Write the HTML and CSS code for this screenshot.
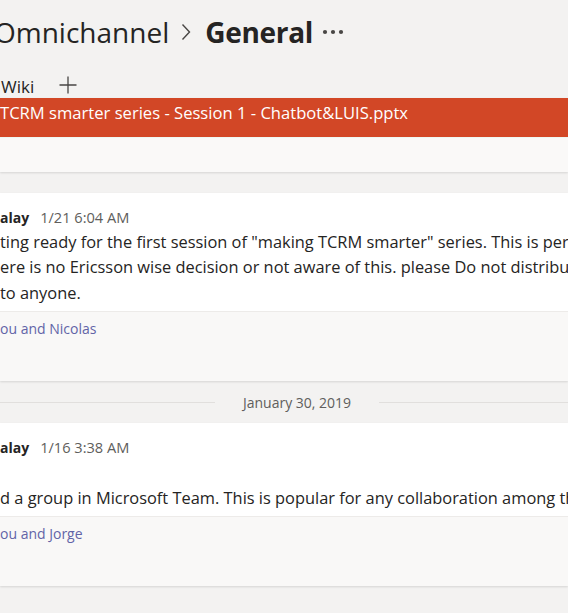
FILE: index.html
```html
<!DOCTYPE html>
<html>
<head>
<meta charset="utf-8">
<link rel="stylesheet" href="styles.css">
</head>
<body>
<div class="page">
  <header class="title">
    <span class="team">Omnichannel</span>
    <svg class="chev" width="10" height="18" viewBox="0 0 10 18"><polyline points="1.5,1.5 8.5,9 1.5,16.5" fill="none" stroke="#484644" stroke-width="1.4"/></svg>
    <span class="channel">General</span>
    <svg class="more" width="22" height="6" viewBox="0 0 22 6"><circle cx="3" cy="3" r="2.1" fill="#484644"/><circle cx="11" cy="3" r="2.1" fill="#484644"/><circle cx="19" cy="3" r="2.1" fill="#484644"/></svg>
  </header>
  <nav class="tabs">
    <span class="tab">Wiki</span>
    <svg class="plus" width="18" height="18" viewBox="0 0 18 18"><path d="M9 0.5V17.5M0.5 9H17.5" stroke="#484644" stroke-width="1.3" fill="none"/></svg>
  </nav>
  <main class="feed">
    <section class="card prev">
      <div class="attach">TCRM smarter series - Session 1 - Chatbot&amp;LUIS.pptx</div>
      <div class="attach-foot"></div>
    </section>

    <section class="card">
      <div class="msg">
        <div class="meta"><span class="author">alay</span><span class="time">1/21 6:04 AM</span></div>
        <p class="line">ting ready for the first session of "making TCRM smarter" series. This is personal initiative</p>
        <p class="line">ere is no Ericsson wise decision or not aware of this. please Do not distribute this</p>
        <p class="line">to anyone.</p>
      </div>
      <div class="foot"><span class="reply">ou and Nicolas</span></div>
    </section>

    <div class="divider"><span>January 30, 2019</span></div>

    <section class="card">
      <div class="msg">
        <div class="meta"><span class="author">alay</span><span class="time">1/16 3:38 AM</span></div>
        <p class="line blank"></p>
        <p class="line">d a group in Microsoft Team. This is popular for any collaboration among the team</p>
      </div>
      <div class="foot"><span class="reply">ou and Jorge</span></div>
    </section>
  </main>
</div>
</body>
</html>
```
FILE: styles.css
```css
* { box-sizing: border-box; }
html, body { margin: 0; padding: 0; }
body {
  background: #f3f2f1;
  font-family: "Open Sans", "Noto Sans", sans-serif;
  color: #252423;
}
.page {
  width: 568px;
  height: 613px;
  overflow: hidden;
  background: #f3f2f1;
}
.title {
  display: flex;
  align-items: center;
  height: 66px;
  padding-bottom: 2px;
  margin-left: -6px;
  white-space: nowrap;
  font-size: 28px;
}
.team { font-weight: 400; color: #252423; }
.chev { margin: 0 14px 0 12px; }
.channel { font-weight: 700; color: #252423; letter-spacing: -0.3px; }
.more { margin-left: 9px; }
.tabs {
  display: flex;
  align-items: center;
  height: 32px;
  padding-top: 8px;
  font-size: 17px;
  color: #252423;
}
.tab { margin-left: 1px; }
.plus { margin-left: 25px; margin-top: -2px; }
.feed {
  display: flex;
  flex-direction: column;
}
.card {
  background: #fff;
  box-shadow: 0 1px 2px rgba(0,0,0,0.12);
}
.prev { margin-bottom: 21px; }
.attach {
  height: 39px;
  background: #d24726;
  color: #fff;
  font-size: 16.6px;
  padding-top: 3px;
  white-space: nowrap;
}
.attach-foot {
  height: 35px;
  background: #faf9f8;
  border-top: 1px solid #eef7f2;
}
.msg {
  padding: 12px 0 6px 0;
  white-space: nowrap;
  overflow: hidden;
}
.meta {
  display: flex;
  align-items: center;
  font-size: 14px;
  height: 24px;
}
.author { font-weight: 700; }
.time { margin-left: 11px; color: #605e5c; font-size: 14.6px; }
.line {
  margin: 0;
  font-size: 16.4px;
  line-height: 25.4px;
  color: #252423;
}
.blank { height: 25.4px; }
.foot {
  height: 70px;
  background: #f9f8f7;
  border-top: 1px solid #edebe9;
  padding-top: 5px;
}
.reply {
  font-size: 14px;
  color: #6264a7;
}
.divider {
  display: flex;
  align-items: center;
  height: 42px;
  margin-right: -26px;
  font-size: 14px;
  color: #605e5c;
}
.divider::before, .divider::after {
  content: "";
  flex: 1;
  height: 1px;
  background: #e1dfdd;
}
.divider span { padding: 0 28px; }
```
